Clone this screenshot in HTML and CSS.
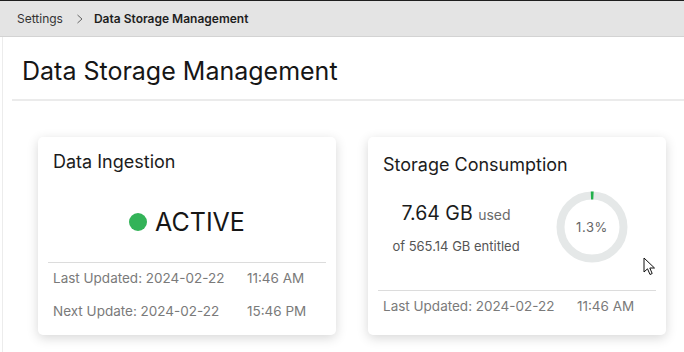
FILE: index.html
```html
<!DOCTYPE html>
<html lang="en">

<head>
    <meta charset="UTF-8">
    <meta name="viewport" content="width=device-width, initial-scale=1.0">
    <title>Data Storage Management</title>
    <link rel="stylesheet" href="styles.css">
</head>

<body>

    <div class="topbar">
        <span class="crumb">Settings</span>
        <svg class="crumb-sep" width="8" height="10" viewBox="0 0 8 10">
            <path d="M1.5 1 L6 5 L1.5 9" fill="none" stroke="#666" stroke-width="1"/>
        </svg>
        <span class="crumb crumb-current">Data Storage Management</span>
    </div>

    <div class="page">
        <div class="page-header">
            <h1>Data Storage Management</h1>
        </div>

        <div class="cards">
            <div class="card">
                <h2 class="card-title">Data Ingestion</h2>
                <div class="status">
                    <span class="status-dot"></span>
                    <span class="status-text">ACTIVE</span>
                </div>
                <div class="card-footer">
                    <span>Last Updated: 2024-02-22</span>
                    <span>11:46 AM</span>
                    <span>Next Update: 2024-02-22</span>
                    <span>15:46 PM</span>
                </div>
            </div>

            <div class="card card-storage">
                <h2 class="card-title">Storage Consumption</h2>
                <div class="usage">
                    <div class="usage-text">
                        <div class="usage-main">7.64 GB <small>used</small></div>
                        <div class="usage-sub">of 565.14 GB entitled</div>
                    </div>
                    <div class="donut">
                        <svg width="72" height="72" viewBox="0 0 72 72">
                            <circle cx="36" cy="36" r="31.5" fill="none" stroke="#e5e8e8" stroke-width="8"/>
                            <circle cx="36" cy="36" r="31.5" fill="none" stroke="#22b04b" stroke-width="8"
                                stroke-dasharray="2.6 400" transform="rotate(-92 36 36)"/>
                        </svg>
                        <span class="donut-label">1.3%</span>
                    </div>
                </div>
                <div class="card-footer">
                    <span>Last Updated: 2024-02-22</span>
                    <span>11:46 AM</span>
                </div>
            </div>
        </div>
    </div>

    <svg class="cursor" width="14" height="20" viewBox="0 0 14 20">
        <path d="M1 1 L1 15 L4.5 11.8 L7 17.5 L9.2 16.5 L6.8 11 L11.5 11 Z" fill="#fff" stroke="#111" stroke-width="1"
            stroke-linejoin="round"/>
    </svg>

</body>

</html>
```

FILE: styles.css
```css
body {
    margin: 0;
    font-family: Inter, "Noto Sans", sans-serif;
    color: #1c1c1c;
    background: #fff;
    height: 352px;
    overflow: hidden;
}

.topbar {
    height: 35px;
    background: #e4e4e4;
    border-top: 1px solid #1e1e1e;
    border-bottom: 1px solid #d3d3d3;
    display: flex;
    align-items: center;
    padding-left: 17px;
    box-sizing: content-box;
}

.crumb {
    font-size: 12px;
    color: #333;
}

.crumb-sep {
    margin: 0 10px 0 13px;
}

.crumb-current {
    font-weight: 600;
    color: #1e1e1e;
}

.page {
    margin-left: 2px;
    border-left: 1px solid #ececec;
    height: 320px;
}

.page-header {
    margin-left: 9px;
    padding: 20px 0 13px 10px;
    border-bottom: 2px solid #ebebeb;
}

.page-header h1 {
    margin: 0;
    font-size: 25px;
    font-weight: 400;
    line-height: 29px;
    color: #161616;
}

.cards {
    display: flex;
    gap: 32px;
    padding: 36px 0 0 35px;
}

.card {
    width: 298px;
    height: 198px;
    box-sizing: border-box;
    background: #fff;
    border-radius: 5px;
    box-shadow: 0 3px 12px rgba(0, 0, 0, 0.16);
    padding-top: 13px;
    display: flex;
    flex-direction: column;
}

.card-title {
    margin: 0 0 0 15px;
    font-size: 18px;
    font-weight: 400;
    line-height: 24px;
    color: #1c1c1c;
}

.card-storage {
    padding-top: 16px;
}

.status {
    display: flex;
    align-items: center;
    justify-content: center;
    gap: 8px;
    margin-top: 33px;
    height: 30px;
}

.status-dot {
    width: 18px;
    height: 18px;
    border-radius: 50%;
    background: #33b358;
}

.status-text {
    font-size: 25px;
    color: #161616;
}

.card-footer {
    margin: auto 10px 0 10px;
    border-top: 1px solid #dcdcdc;
    padding: 0 0 9px 5px;
    display: grid;
    grid-template-columns: 194px auto;
    row-gap: 3px;
    font-size: 13.5px;
    line-height: 30px;
    color: #7a7a7a;
}

.card-storage .card-footer {
    padding-bottom: 14px;
}

.usage {
    display: flex;
    align-items: center;
    margin-top: 14px;
    padding-left: 15px;
}

.usage-text {
    width: 146px;
    text-align: center;
}

.usage-main {
    font-size: 19.5px;
    color: #1c1c1c;
}

.usage-main small {
    font-size: 14px;
    color: #6a6a6a;
}

.usage-sub {
    margin-top: 13px;
    font-size: 13px;
    color: #555;
}

.donut {
    position: relative;
    width: 72px;
    height: 72px;
    margin-left: 27px;
}

.donut svg {
    display: block;
}

.donut-label {
    position: absolute;
    inset: 0;
    display: flex;
    align-items: center;
    justify-content: center;
    font-size: 13px;
    letter-spacing: 0.6px;
    color: #666;
}

.cursor {
    position: absolute;
    left: 643px;
    top: 257px;
}
```
